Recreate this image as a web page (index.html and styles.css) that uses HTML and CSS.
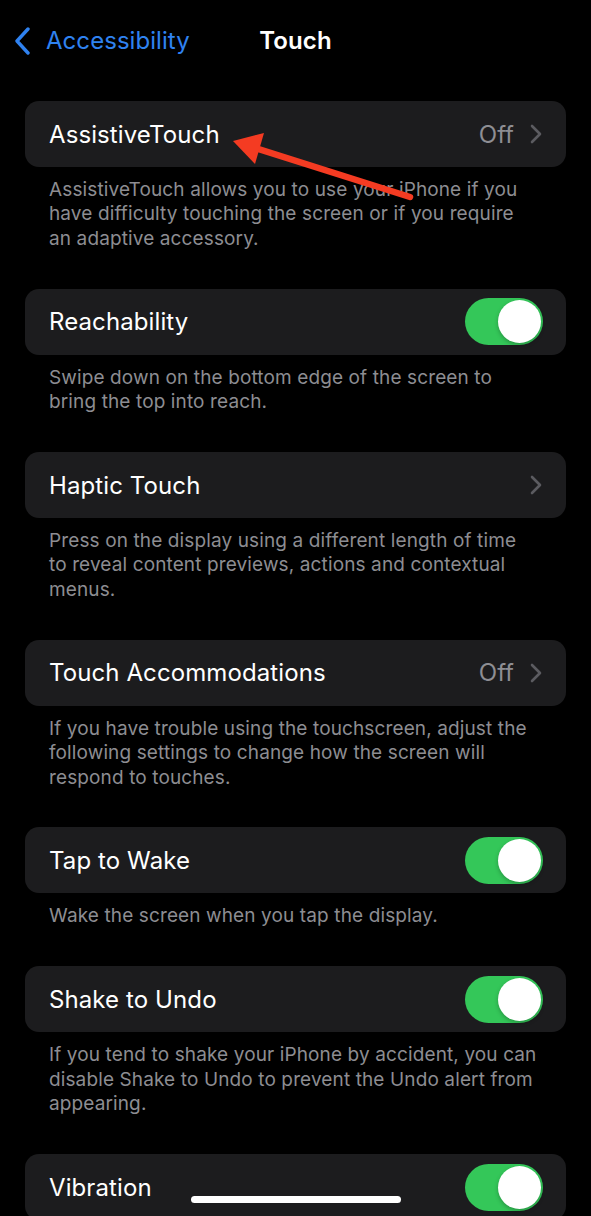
FILE: index.html
```html
<!DOCTYPE html>
<html lang="en">
<head>
<meta charset="utf-8">
<title>Touch</title>
<link rel="stylesheet" href="styles.css">
</head>
<body>
<div class="screen">
  <header class="nav">
    <div class="back">
      <svg class="back-chev" width="18" height="28" viewBox="0 0 18 28"><path d="M15 2 L4 14 L15 26" fill="none" stroke="#2f82f0" stroke-width="3.4" stroke-linecap="round" stroke-linejoin="round"/></svg>
      <span class="back-label">Accessibility</span>
    </div>
    <h1 class="title">Touch</h1>
    <div></div>
  </header>

  <main class="list">
    <section class="group">
      <div class="card">
        <span class="label">AssistiveTouch</span>
        <span class="detail">Off<svg class="chev" width="12" height="20" viewBox="0 0 12 20"><path d="M2 2 L10 10 L2 18" fill="none" stroke="#5b5b60" stroke-width="2.6" stroke-linecap="round" stroke-linejoin="round"/></svg></span>
      </div>
      <p class="footer">AssistiveTouch allows you to use your iPhone if you<br>have difficulty touching the screen or if you require<br>an adaptive accessory.</p>
    </section>

    <section class="group">
      <div class="card">
        <span class="label">Reachability</span>
        <span class="toggle"><span class="knob"></span></span>
      </div>
      <p class="footer">Swipe down on the bottom edge of the screen to<br>bring the top into reach.</p>
    </section>

    <section class="group">
      <div class="card">
        <span class="label">Haptic Touch</span>
        <span class="detail"><svg class="chev" width="12" height="20" viewBox="0 0 12 20"><path d="M2 2 L10 10 L2 18" fill="none" stroke="#5b5b60" stroke-width="2.6" stroke-linecap="round" stroke-linejoin="round"/></svg></span>
      </div>
      <p class="footer">Press on the display using a different length of time<br>to reveal content previews, actions and contextual<br>menus.</p>
    </section>

    <section class="group">
      <div class="card">
        <span class="label">Touch Accommodations</span>
        <span class="detail">Off<svg class="chev" width="12" height="20" viewBox="0 0 12 20"><path d="M2 2 L10 10 L2 18" fill="none" stroke="#5b5b60" stroke-width="2.6" stroke-linecap="round" stroke-linejoin="round"/></svg></span>
      </div>
      <p class="footer">If you have trouble using the touchscreen, adjust the<br>following settings to change how the screen will<br>respond to touches.</p>
    </section>

    <section class="group">
      <div class="card">
        <span class="label">Tap to Wake</span>
        <span class="toggle"><span class="knob"></span></span>
      </div>
      <p class="footer">Wake the screen when you tap the display.</p>
    </section>

    <section class="group">
      <div class="card">
        <span class="label">Shake to Undo</span>
        <span class="toggle"><span class="knob"></span></span>
      </div>
      <p class="footer">If you tend to shake your iPhone by accident, you can<br>disable Shake to Undo to prevent the Undo alert from<br>appearing.</p>
    </section>

    <section class="group">
      <div class="card">
        <span class="label">Vibration</span>
        <span class="toggle"><span class="knob"></span></span>
      </div>
    </section>
  </main>

  <svg class="arrow" width="591" height="260" viewBox="0 0 591 260">
    <line x1="410" y1="197" x2="252" y2="147" stroke="#f43b22" stroke-width="6.5" stroke-linecap="round"/>
    <polygon points="233,141 264,133 255,164" fill="#f43b22"/>
  </svg>

  <div class="home-indicator"></div>
</div>
</body>
</html>
```

FILE: styles.css
```css
* {
  box-sizing: border-box;
}

html, body {
  margin: 0;
  padding: 0;
  background: #000;
}

body {
  font-family: Inter, "Noto Sans", "Liberation Sans", sans-serif;
  color: #fff;
  -webkit-font-smoothing: antialiased;
}

.screen {
  position: relative;
  width: 591px;
  height: 1216px;
  overflow: hidden;
  background: #000;
}

.nav {
  display: grid;
  grid-template-columns: 1fr auto 1fr;
  align-items: center;
  height: 101px;
  padding: 0 0 20px 0;
}

.back {
  display: flex;
  align-items: center;
  padding-left: 13px;
  gap: 15px;
}

.back-chev {
  display: block;
}

.back-label {
  font-size: 24px;
  color: #2f82f0;
  letter-spacing: 0.05px;
}

.title {
  margin: 0;
  font-size: 24px;
  font-weight: 600;
  color: #fff;
  letter-spacing: 0.1px;
}

.list {
  display: flex;
  flex-direction: column;
  padding: 0 25px;
}

.group {
  display: flex;
  flex-direction: column;
}

.card {
  display: flex;
  align-items: center;
  justify-content: space-between;
  height: 66px;
  padding: 0 24px 0 24px;
  background: #1c1c1e;
  border-radius: 14px;
}

.label {
  font-size: 24px;
  color: #fff;
  letter-spacing: 0.1px;
}

.detail {
  display: flex;
  align-items: center;
  gap: 16px;
  font-size: 24px;
  color: #8e8e93;
}

.chev {
  display: block;
}

.toggle {
  position: relative;
  display: block;
  width: 78px;
  height: 47px;
  border-radius: 24px;
  background: #34c759;
  margin-right: -1px;
}

.knob {
  position: absolute;
  top: 2px;
  right: 2px;
  width: 43px;
  height: 43px;
  border-radius: 50%;
  background: #fff;
  box-shadow: 0 2px 4px rgba(0, 0, 0, 0.25);
}

.footer {
  margin: 0;
  padding: 11px 20px 37.5px 24px;
  font-size: 19px;
  line-height: 24.4px;
  color: #8d8d92;
  letter-spacing: 0.12px;
  white-space: nowrap;
}

.arrow {
  position: absolute;
  left: 0;
  top: 0;
  pointer-events: none;
}

.home-indicator {
  position: absolute;
  left: 191px;
  top: 1196px;
  width: 210px;
  height: 7px;
  border-radius: 4px;
  background: #fff;
}
```
